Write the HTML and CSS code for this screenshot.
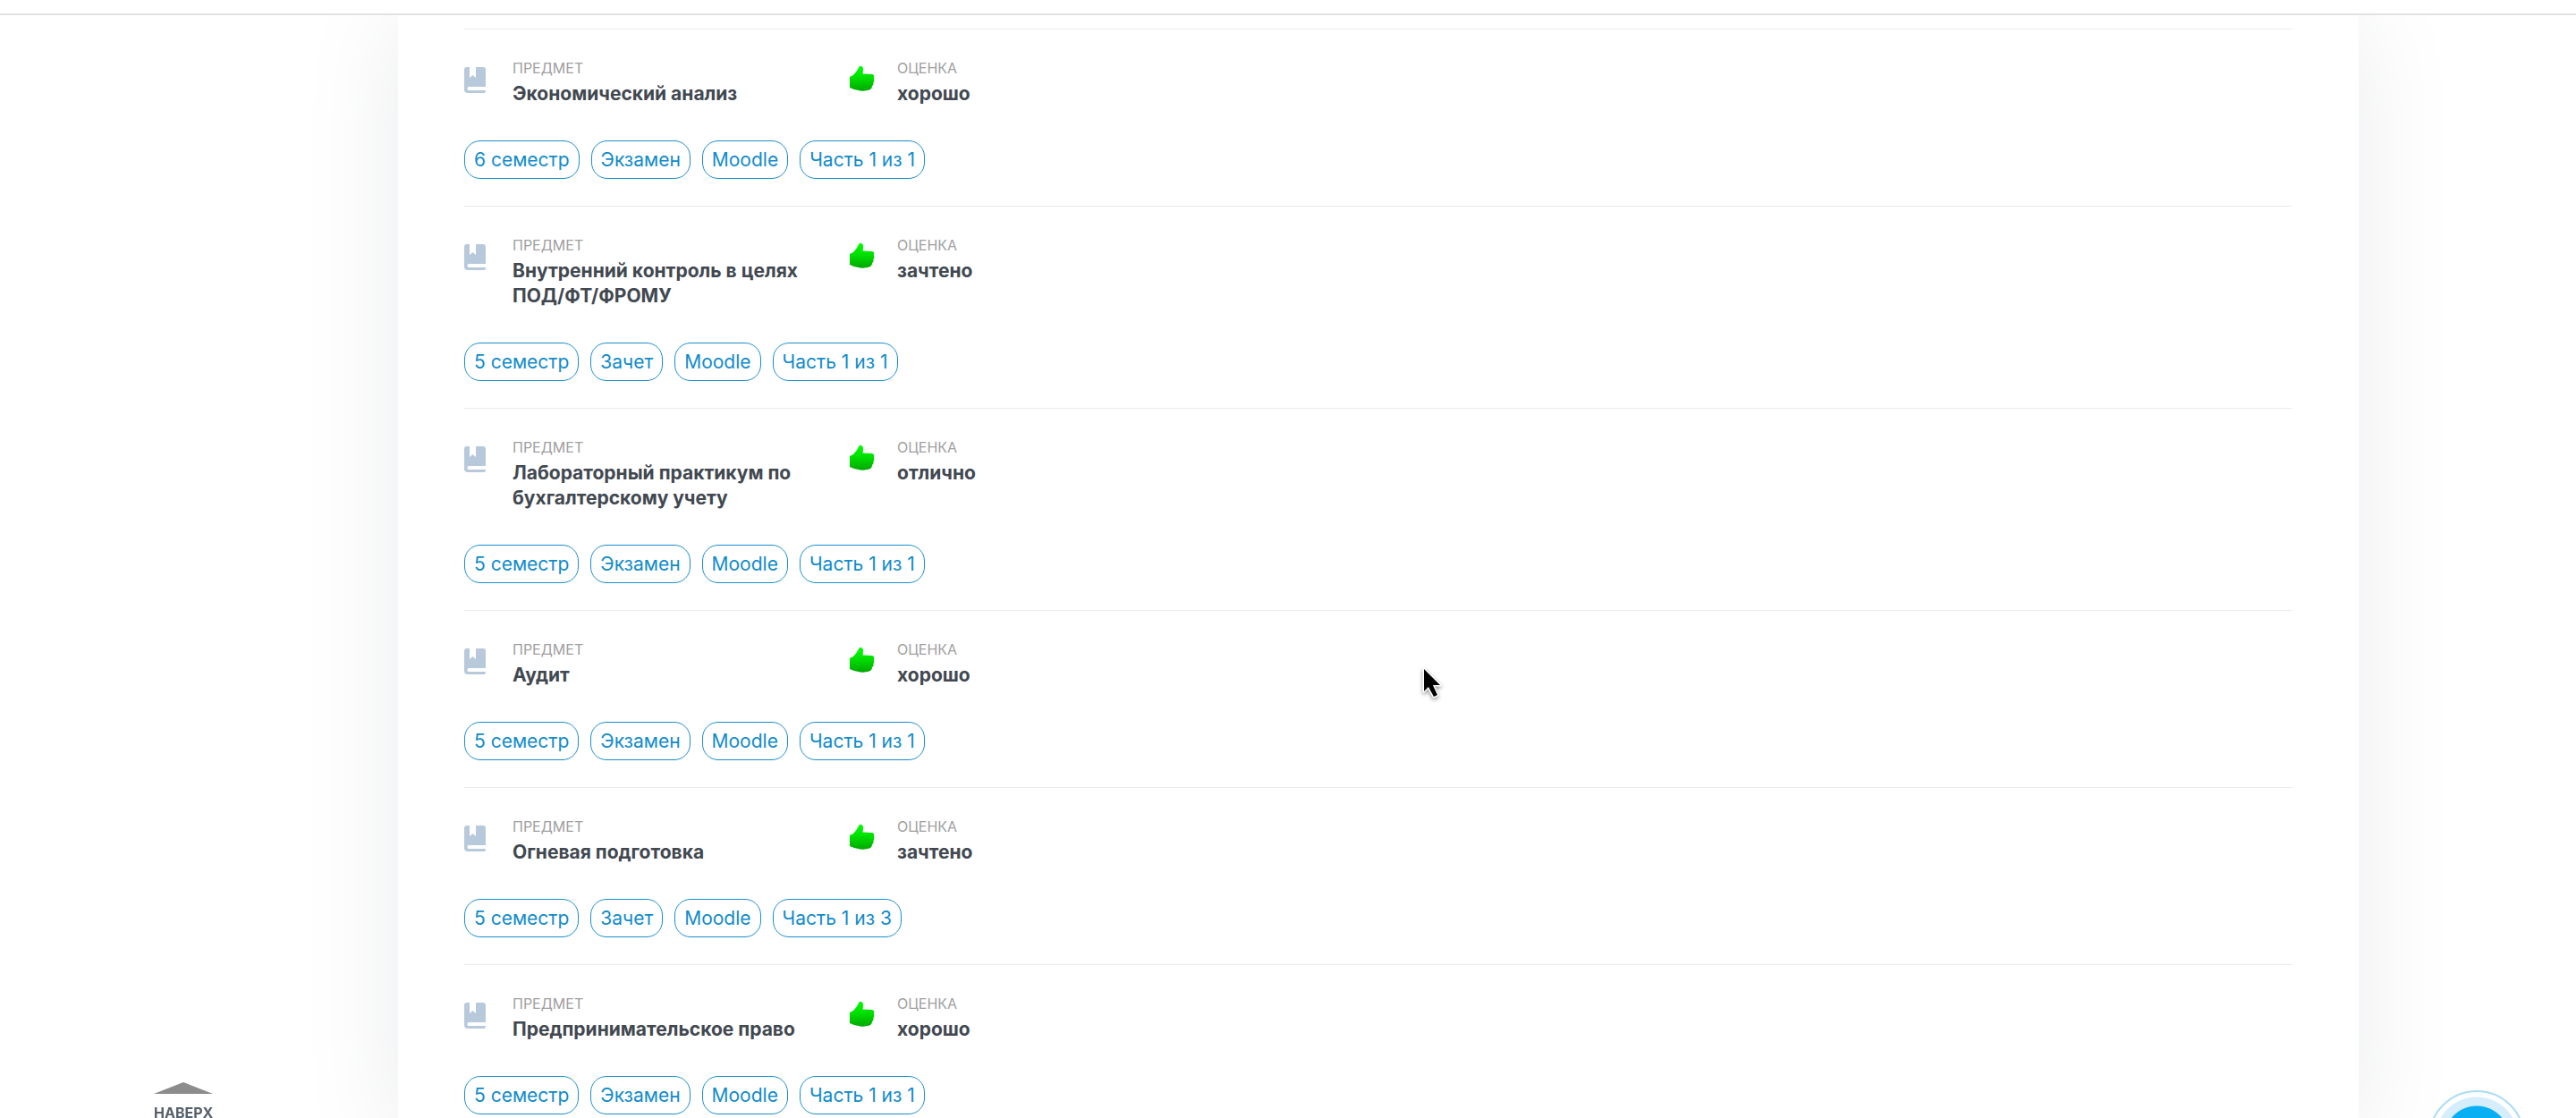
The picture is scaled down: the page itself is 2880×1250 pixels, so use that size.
FILE: index.html
```html
<!DOCTYPE html>
<html lang="ru">

<head>
    <meta charset="UTF-8">
    <meta name="viewport" content="width=device-width, initial-scale=1.0">
    <title>Зачетная книжка</title>
    <link rel="stylesheet" href="styles.css">
</head>

<body>
    <!-- общие иконки -->
    <svg class="sprite" aria-hidden="true">
        <defs>
            <linearGradient id="thumb-fill" x1="0" y1="0" x2="0" y2="1">
                <stop offset="0" stop-color="#00ff00" />
                <stop offset="0.5" stop-color="#00dc00" />
                <stop offset="1" stop-color="#00a800" />
            </linearGradient>
        </defs>
        <symbol id="book" viewBox="0 0 24 30">
            <path fill="#b8c9dc" d="M3 1H6V13L9.500 10L13 13V1H21Q24 1 24 4V23H5Q3.500 23 3.500 25T5 27H24V28Q24 30 22 30H4Q0 30 0 26V4Q0 1 3 1Z" />
        </symbol>
        <symbol id="thumb" viewBox="0 0 28 29">
            <path fill="url(#thumb-fill)" d="M0 13L4 11Q8 7 10 2.500Q11 0 13 1Q15.500 2 15 6L14.500 9.500L25 10Q28 10.500 27 14.500Q28 17 26.500 19Q27 22 25 23Q25 26 22 27.500Q17 29 12 28.500L5 27L0 25Z" />
        </symbol>
    </svg>

    <header class="header"></header>

    <main class="page">
        <section class="content">
            <article class="item">
                <div class="info">
                    <svg class="icon"><use href="#book" /></svg>
                    <div class="subject">
                        <div class="label">ПРЕДМЕТ</div>
                        <div class="value">Экономический анализ</div>
                    </div>
                    <svg class="icon icon-thumb"><use href="#thumb" /></svg>
                    <div class="grade">
                        <div class="label">ОЦЕНКА</div>
                        <div class="value">хорошо</div>
                    </div>
                </div>
                <div class="tags">
                    <span class="tag">6 семестр</span>
                    <span class="tag">Экзамен</span>
                    <span class="tag">Moodle</span>
                    <span class="tag">Часть 1 из 1</span>
                </div>
            </article>

            <article class="item">
                <div class="info">
                    <svg class="icon"><use href="#book" /></svg>
                    <div class="subject">
                        <div class="label">ПРЕДМЕТ</div>
                        <div class="value">Внутренний контроль в целях ПОД/ФТ/ФРОМУ</div>
                    </div>
                    <svg class="icon icon-thumb"><use href="#thumb" /></svg>
                    <div class="grade">
                        <div class="label">ОЦЕНКА</div>
                        <div class="value">зачтено</div>
                    </div>
                </div>
                <div class="tags">
                    <span class="tag">5 семестр</span>
                    <span class="tag">Зачет</span>
                    <span class="tag">Moodle</span>
                    <span class="tag">Часть 1 из 1</span>
                </div>
            </article>

            <article class="item">
                <div class="info">
                    <svg class="icon"><use href="#book" /></svg>
                    <div class="subject">
                        <div class="label">ПРЕДМЕТ</div>
                        <div class="value">Лабораторный практикум по бухгалтерскому учету</div>
                    </div>
                    <svg class="icon icon-thumb"><use href="#thumb" /></svg>
                    <div class="grade">
                        <div class="label">ОЦЕНКА</div>
                        <div class="value">отлично</div>
                    </div>
                </div>
                <div class="tags">
                    <span class="tag">5 семестр</span>
                    <span class="tag">Экзамен</span>
                    <span class="tag">Moodle</span>
                    <span class="tag">Часть 1 из 1</span>
                </div>
            </article>

            <article class="item">
                <div class="info">
                    <svg class="icon"><use href="#book" /></svg>
                    <div class="subject">
                        <div class="label">ПРЕДМЕТ</div>
                        <div class="value">Аудит</div>
                    </div>
                    <svg class="icon icon-thumb"><use href="#thumb" /></svg>
                    <div class="grade">
                        <div class="label">ОЦЕНКА</div>
                        <div class="value">хорошо</div>
                    </div>
                </div>
                <div class="tags">
                    <span class="tag">5 семестр</span>
                    <span class="tag">Экзамен</span>
                    <span class="tag">Moodle</span>
                    <span class="tag">Часть 1 из 1</span>
                </div>
            </article>

            <article class="item">
                <div class="info">
                    <svg class="icon"><use href="#book" /></svg>
                    <div class="subject">
                        <div class="label">ПРЕДМЕТ</div>
                        <div class="value">Огневая подготовка</div>
                    </div>
                    <svg class="icon icon-thumb"><use href="#thumb" /></svg>
                    <div class="grade">
                        <div class="label">ОЦЕНКА</div>
                        <div class="value">зачтено</div>
                    </div>
                </div>
                <div class="tags">
                    <span class="tag">5 семестр</span>
                    <span class="tag">Зачет</span>
                    <span class="tag">Moodle</span>
                    <span class="tag">Часть 1 из 3</span>
                </div>
            </article>

            <article class="item">
                <div class="info">
                    <svg class="icon"><use href="#book" /></svg>
                    <div class="subject">
                        <div class="label">ПРЕДМЕТ</div>
                        <div class="value">Предпринимательское право</div>
                    </div>
                    <svg class="icon icon-thumb"><use href="#thumb" /></svg>
                    <div class="grade">
                        <div class="label">ОЦЕНКА</div>
                        <div class="value">хорошо</div>
                    </div>
                </div>
                <div class="tags">
                    <span class="tag">5 семестр</span>
                    <span class="tag">Экзамен</span>
                    <span class="tag">Moodle</span>
                    <span class="tag">Часть 1 из 1</span>
                </div>
            </article>
        </section>
    </main>

    <!-- кнопка наверх -->
    <a class="to-top" href="#">
        <svg class="to-top-arrow" viewBox="0 0 66 13"><path fill="#8c8c8c" d="M0 13L33 0L66 13Z" /></svg>
        НАВЕРХ
    </a>

    <!-- кнопка чата -->
    <button class="chat" type="button" aria-label="Чат"></button>

    <svg class="cursor" viewBox="0 0 24 38" aria-hidden="true">
        <path fill="#000" stroke="#fff" stroke-width="3" stroke-linejoin="round" paint-order="stroke" d="M3 3V28L8 23L14 34L18 32L13 21H21Z" />
    </svg>
</body>

</html>
```
FILE: styles.css
```css
* {
    box-sizing: border-box;
}

body {
    margin: 0;
    height: 100vh;
    overflow: hidden;
    background-color: #fff;
    color: #414850;
    font-family: Inter, "Noto Sans", sans-serif;
}

.sprite {
    position: absolute;
    width: 0;
    height: 0;
}

.header {
    position: relative;
    z-index: 1;
    height: 17px;
    background-color: #fff;
    border-bottom: 2px solid #e1e3e0;
}

.page {
    padding: 0 243px 0 445px;
}

.content {
    padding: 15px 74px 0;
    background-color: #fff;
    box-shadow: 0 0 110px #ebecee;
}

.item {
    padding: 33px 0 30px;
    border-top: 1px solid #e9ebec;
}

.info {
    display: flex;
    align-items: flex-start;
}

.icon {
    flex: none;
    width: 24px;
    height: 30px;
    margin: 8px 30px 0 0;
}

.icon-thumb {
    width: 28px;
    height: 29px;
    margin: 7px 25px 0 0;
}

.subject {
    width: 377px;
    padding-right: 40px;
}

.label {
    margin-bottom: 5px;
    color: #a0a0a0;
    font-size: 16px;
    line-height: 20px;
}

.value {
    font-size: 21px;
    font-weight: 700;
    line-height: 28px;
}

.tags {
    display: flex;
    flex-wrap: wrap;
    gap: 13px;
    margin-top: 38px;
}

.tag {
    padding: 1px 10px 0;
    border: 1px solid #1a8ecb;
    border-radius: 18px;
    color: #118bcb;
    font-size: 21px;
    line-height: 40px;
}

.to-top {
    position: fixed;
    left: 172px;
    bottom: -5px;
    display: flex;
    flex-direction: column;
    align-items: center;
    gap: 10px;
    color: #56606b;
    font-size: 16px;
    font-weight: 700;
    line-height: 22px;
    text-decoration: none;
}

.to-top-arrow {
    width: 66px;
    height: 13px;
}

.chat {
    position: fixed;
    right: 57px;
    bottom: -77px;
    width: 108px;
    height: 108px;
    border: 2px solid #a9dcf8;
    border-radius: 50%;
    background: radial-gradient(circle, #08aff2 36px, #d6eefc 37px, #d6eefc 46px, #fff 47px);
    cursor: pointer;
}

.cursor {
    position: fixed;
    top: 745px;
    left: 1589px;
    width: 24px;
    height: 38px;
    filter: drop-shadow(0 2px 2px #0006);
}
```
